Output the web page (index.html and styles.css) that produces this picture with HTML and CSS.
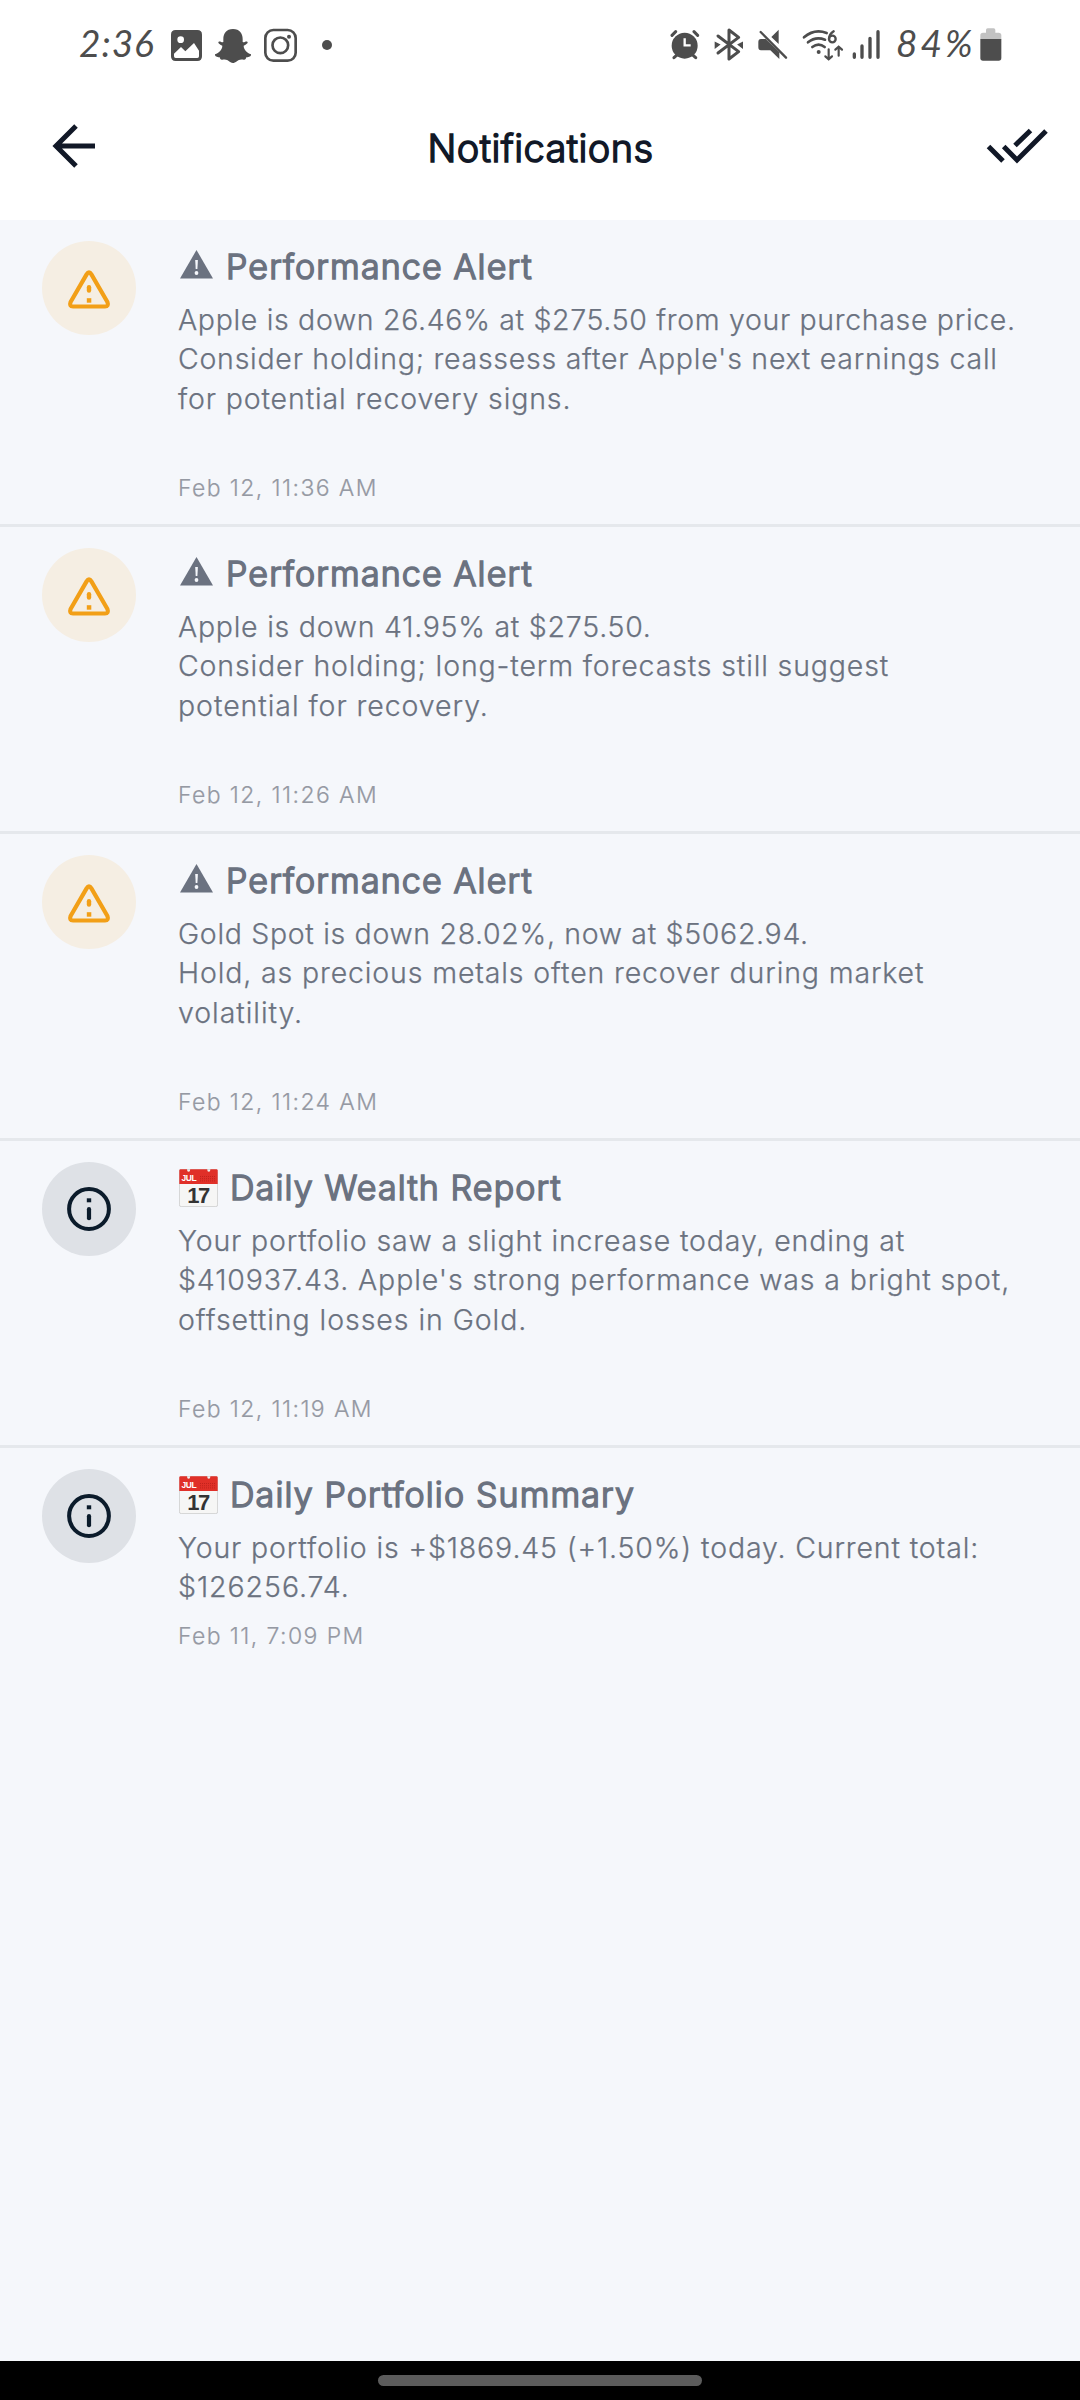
FILE: index.html
```html
<!DOCTYPE html>
<html lang="en">
<head>
<meta charset="utf-8">
<title>Notifications</title>
<link rel="stylesheet" href="styles.css">
</head>
<body>
<svg class="defs" aria-hidden="true">
  <symbol id="warn" viewBox="0 0 44 40">
    <path d="M19.600 4.400Q22 0.400 24.400 4.400L40.400 32Q42 36.500 38 36.500H6Q2 36.500 3.600 32Z" fill="none" stroke="#f29f17" stroke-width="4.200" stroke-linejoin="round"/>
    <path d="M22 17.300V20.500" stroke="#f29f17" stroke-width="4.400" stroke-linecap="round"/>
    <path d="M19.800 28.200h4.500v4.500h-4.500z" fill="#f29f17"/>
  </symbol>
  <symbol id="info" viewBox="0 0 44 44">
    <circle cx="22" cy="22" r="19.900" fill="none" stroke="#0b1b2b" stroke-width="4"/>
    <path d="M19.800 11.300h4.400v4h-4.400z" fill="#0b1b2b"/>
    <path d="M22 22.200V31.200" stroke="#0b1b2b" stroke-width="4.200" stroke-linecap="round"/>
  </symbol>
  <symbol id="tri" viewBox="0 0 33 29">
    <path d="M16.500 0 33 28.500H0Z" fill="#6b7280" stroke="none"/>
    <path d="M15.200 10h2.700l-.5 9h-1.700z" fill="#f5f7fb"/>
    <circle cx="16.500" cy="23" r="1.900" fill="#f5f7fb"/>
  </symbol>
  <symbol id="cal" viewBox="0 0 39 38">
    <rect x=".4" y=".6" width="38.200" height="37" rx="1.800" fill="#f6f6f5" stroke="#c9c9c9" stroke-width=".8"/>
    <path d="M.3 1.500Q.3.300 1.500.3H8q0 2.500 1.600 2.500T11.200.3h17q0 2.500 1.600 2.500T31.400.3h6.100q1.200 0 1.200 1.200V15H.3Z" fill="#e03028"/>
    <path d="M21 7.500h15M21 9.700h15M21 11.900h15" stroke="#b9211b" stroke-width=".8" stroke-dasharray="1 1"/>
    <text x="2.500" y="12.300" class="cal-month">JUL</text>
    <text x="19" y="33.500" class="cal-day" text-anchor="middle">17</text>
  </symbol>
</svg>
<div class="screen">
  <div class="status">
    <div class="status-left">
      <span class="time">2:36</span>
      <svg class="s-img" width="31" height="40" viewBox="333 45 93 120"><path fill="#4d4d4d" fill-rule="evenodd" d="M347 60h65q14 0 14 14v65q0 14-14 14h-65q-14 0-14-14V74q0-14 14-14zM342 139q0 5 5 5h65q5 0 5-5v-17l-15-23-26 25-13-13-21 20zM352 89a10 10 0 1 0 20 0a10 10 0 1 0-20 0z"/></svg>
      <svg class="s-snap" width="36" height="40" viewBox="466 45 108 120"><path fill="#4d4d4d" d="M520 57c20 0 29 14 29 30v9c4 2 10-4 14-1 4 4-3 8-11 12 0 12 10 21 22 26 2 6-8 9-14 9-1 4-3 8-8 7-6-1-11-1-16 2-9 6-10 8-16 8s-8-2-16-8c-5-3-10-3-16-2-5 1-7-3-8-7-6 0-16-3-14-9 12-5 22-14 22-26-8-4-15-8-11-12 4-3 10 3 14 1v-9c0-16 9-30 29-30z"/></svg>
      <svg class="s-ig" width="33" height="40" viewBox="612 45 99 120"><g fill="none" stroke="#4d4d4d" stroke-width="8"><rect x="616" y="60" width="91" height="92" rx="24"/><circle cx="661" cy="106" r="23.500"/></g><circle cx="687" cy="80" r="6" fill="#4d4d4d"/></svg>
      <span class="dot"></span>
    </div>
    <div class="status-right">
      <svg class="s-alarm" width="30" height="40" viewBox="59 45 90 120"><g stroke="#4d4d4d" stroke-width="9" stroke-linecap="round"><path d="M65 76 76 65M131 65l11 11M71 143l10-9M136 143l-10-9"/></g><circle cx="103" cy="107" r="39" fill="#4d4d4d"/><path d="M103 85v21h18" fill="none" stroke="#fff" stroke-width="7"/></svg>
      <svg class="s-bt" width="30" height="40" viewBox="192 45 90 120"><path d="M204 78 266 125 237 147V60l29 22-62 47" fill="none" stroke="#4d4d4d" stroke-width="9" stroke-linejoin="round" stroke-linecap="round"/><path d="M196 98l12 6-12 9zM277 98l-12 6 12 9z" fill="#4d4d4d" stroke="#4d4d4d" stroke-width="4"/></svg>
      <svg class="s-mute" width="31" height="40" viewBox="321 45 93 120"><path d="M386 59v43l-22-21zM325 96q0-9 8-9h14l41 40v20l-27-26h-28q-8 0-8-9z" fill="#4d4d4d"/><path d="M332 66 408 143" stroke="#4d4d4d" stroke-width="7" stroke-linecap="round"/></svg>
      <svg class="s-wifi" width="42" height="40" viewBox="455 45 126 120"><g fill="none" stroke="#4d4d4d" stroke-width="8" stroke-linecap="round"><path d="M461 82q31-27 68-13M473 97q23-19 51-8M486 111q19-14 37 0"/><path d="M535 118v29M525 139l10 9 10-9M565 137v-26M555 119l10-9 10 9" stroke-width="6.500"/><path d="M550 64q-14 9-14 23" stroke-width="7"/><circle cx="546" cy="87" r="10" stroke-width="7"/></g><circle cx="505" cy="126" r="6" fill="#4d4d4d"/></svg>
      <svg class="s-sig" width="28" height="40" viewBox="606 45 84 120"><path d="M613 132v10M636 108v34M660 85v57M684 65v77" stroke="#4d4d4d" stroke-width="10" stroke-linecap="round"/></svg>
      <span class="pct">84%</span>
      <svg class="s-bat" width="22" height="40" viewBox="989 45 66 120"><path d="M1007 60q0-5 5-5h18q5 0 5 5v8h10q8 0 8 8v12h-63V76q0-8 8-8h9z" fill="#c2c2c2"/><path d="M990 87h63v57q0 8-8 8h-47q-8 0-8-8z" fill="#4d4d4d"/></svg>
    </div>
  </div>
  <header class="bar">
    <svg width="46" height="46" viewBox="0 0 46 46"><path d="M43 23H5M24 3 4 23l20 20" fill="none" stroke="#111827" stroke-width="5"/></svg>
    <h1>Notifications</h1>
    <svg width="62" height="36" viewBox="0 0 62 36"><path d="M2.500 18.500 17 33M17.700 18.500 31 32 60 3M29 17.500 44.500 2.500" fill="none" stroke="#111827" stroke-width="5"/></svg>
  </header>
  <main class="list">
    <article class="row">
      <div class="badge warn"><svg width="44" height="40"><use href="#warn"/></svg></div>
      <div class="content">
        <h2><svg class="tri" width="33" height="29"><use href="#tri"/></svg>Performance Alert</h2>
        <p class="tall"><span class="tightest">Apple is down 26.46% at $275.50 from your purchase price.</span><br><span class="tighter">Consider holding; reassess after Apple's next earnings call</span><br><span class="tight">for potential recovery signs.</span></p>
        <time>Feb 12, 11:36 AM</time>
      </div>
    </article>
    <article class="row">
      <div class="badge warn"><svg width="44" height="40"><use href="#warn"/></svg></div>
      <div class="content">
        <h2><svg class="tri" width="33" height="29"><use href="#tri"/></svg>Performance Alert</h2>
        <p class="tall"><span class="tighter">Apple is down 41.95% at $275.50.</span><br><span class="tight">Consider holding; long-term forecasts still suggest</span><br>potential for recovery.</p>
        <time>Feb 12, 11:26 AM</time>
      </div>
    </article>
    <article class="row">
      <div class="badge warn"><svg width="44" height="40"><use href="#warn"/></svg></div>
      <div class="content">
        <h2><svg class="tri" width="33" height="29"><use href="#tri"/></svg>Performance Alert</h2>
        <p class="tall"><span class="tightest">Gold Spot is down 28.02%, now at $5062.94.</span><br><span class="tight">Hold, as precious metals often recover during market</span><br>volatility.</p>
        <time>Feb 12, 11:24 AM</time>
      </div>
    </article>
    <article class="row">
      <div class="badge info"><svg width="44" height="44"><use href="#info"/></svg></div>
      <div class="content">
        <h2><svg class="cal" width="39" height="38"><use href="#cal"/></svg>Daily Wealth Report</h2>
        <p class="tall"><span class="tight">Your portfolio saw a slight increase today, ending at</span><br><span class="tight">$410937.43. Apple's strong performance was a bright spot,</span><br>offsetting losses in Gold.</p>
        <time>Feb 12, 11:19 AM</time>
      </div>
    </article>
    <article class="row last">
      <div class="badge info"><svg width="44" height="44"><use href="#info"/></svg></div>
      <div class="content">
        <h2><svg class="cal" width="39" height="38"><use href="#cal"/></svg>Daily Portfolio Summary</h2>
        <p><span class="tight">Your portfolio is +$1869.45 (+1.50%) today. Current total:</span><br>$126256.74.</p>
        <time>Feb 11, 7:09 PM</time>
      </div>
    </article>
  </main>
  <footer class="nav"><span class="handle"></span></footer>
</div>
</body>
</html>
```
FILE: styles.css
```css
* { box-sizing: border-box; }
body { margin: 0; font-family: Inter, "Liberation Sans", sans-serif; background: #f5f7fb; }
svg { display: block; flex: none; }
.defs { display: none; }
.screen { width: 1080px; height: 2400px; display: flex; flex-direction: column; }
.status { height: 92px; padding: 25px 78px 0 79px; background: #fff; display: flex; justify-content: space-between; }
.status-left, .status-right { display: flex; height: 40px; align-items: center; }
.time, .pct { font-family: Lato, sans-serif; font-style: italic; color: #4d4d4d; line-height: 36px; height: 40px; white-space: nowrap; }
.time { width: 92px; font-size: 37px; letter-spacing: 1px; }
.s-snap { margin-left: 13px; }
.s-ig { margin-left: 13px; }
.dot { width: 10px; height: 10px; border-radius: 50%; background: #4d4d4d; margin-left: 25px; }
.s-bt { margin-left: 14px; }
.s-mute { margin-left: 13px; }
.s-wifi { margin-left: 14px; }
.s-sig { margin-left: 8px; }
.pct { width: 84px; font-size: 37px; margin-left: 16px; letter-spacing: 3px; }
.bar { height: 128px; padding: 31px 32px 0 52px; background: #fff; display: flex; justify-content: space-between; align-items: flex-start; }
.bar h1 { margin: 0; padding: 2px 3px 0 0; font-size: 38px; line-height: 46px; font-weight: 300; letter-spacing: .4px; font-variant-ligatures: none; -webkit-text-stroke: 1.500px; color: #111827; }
.bar svg:last-child { margin-top: 5px; }
.list { flex: 1; background: #f5f7fb; }
.row { height: 307px; padding: 21px 42px 0; display: flex; gap: 42px; border-bottom: 3px solid #e5e8ec; }
.row.last { border-bottom: 0; }
.badge { flex: none; width: 94px; height: 94px; border-radius: 50%; display: flex; align-items: center; justify-content: center; }
.badge.warn { background: #f5eee3; padding-top: 3px; }
.badge.info { background: #dee1e6; }
.content { padding-top: 3px; white-space: nowrap; display: flex; flex-direction: column; }
.content h2 { margin: 0 0 11px; display: flex; align-items: flex-start; font-size: 34px; line-height: 45px; font-weight: 300; -webkit-text-stroke: 1.600px; letter-spacing: 1.140px; color: #6b7280; }
.tri { margin: 6px 13px 0 2px; }
.cal { margin: 4px 12px 0 1px; -webkit-text-stroke: 0; letter-spacing: 0; }
.content p { margin: 0; font-size: 28.5px; line-height: 39.3px; font-weight: 300; -webkit-text-stroke: .25px; letter-spacing: .94px; color: #6b7280; }
.content p.tall { height: 158px; }
.tight { letter-spacing: .86px; }
.tighter { letter-spacing: .74px; }
.tightest { letter-spacing: .67px; }
.content time { margin-top: 13.5px; font-size: 23px; line-height: 32px; font-weight: 300; letter-spacing: 1.400px; -webkit-text-stroke: .2px; color: #9599a3; }
.cal-month { font: bold 8.500px "Liberation Sans", sans-serif; letter-spacing: -.4px; fill: #fff; }
.cal-day { font: bold 22px "Liberation Sans", sans-serif; fill: #333; letter-spacing: -1.500px; }
.nav { height: 39px; background: #000; display: flex; justify-content: center; padding-top: 14px; }
.handle { width: 324px; height: 11px; border-radius: 6px; background: #5c5c5c; }
```
